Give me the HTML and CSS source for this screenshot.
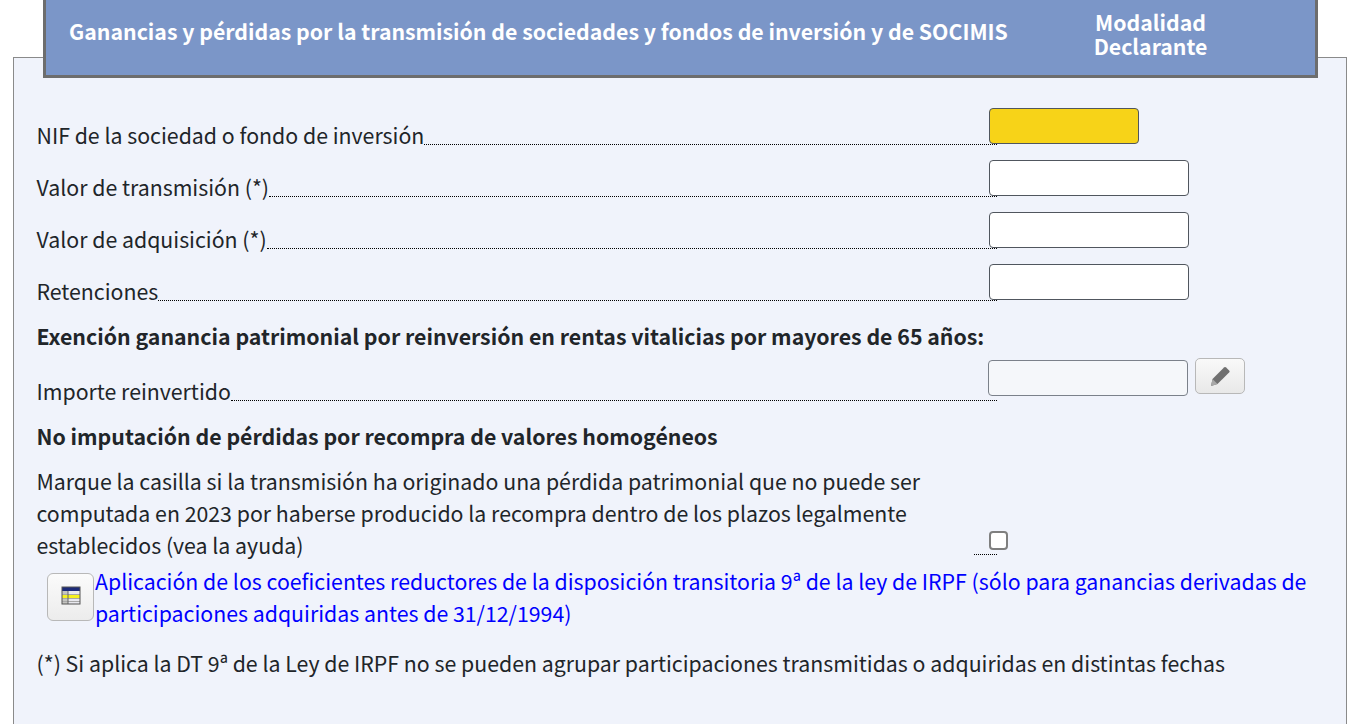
FILE: index.html
```html
<!DOCTYPE html>
<html lang="en">
<head>
    <meta charset="UTF-8">
    <meta name="viewport" content="width=device-width, initial-scale=1.0">
    <title>Ganancias y pérdidas</title>
    <link rel="stylesheet" href="styles.css">
</head>
<body>
    <div class="header">
        <div class="header-title">Ganancias y pérdidas por la transmisión de sociedades y fondos de inversión y de SOCIMIS</div>
        <div class="header-mode">Modalidad<br>Declarante</div>
    </div>
    <div class="panel">
        <div class="row">
            <div class="label"><span>NIF de la sociedad o fondo de inversión</span><i class="dots"></i></div>
            <input type="text" class="field short">
        </div>
        <div class="row">
            <div class="label"><span>Valor de transmisión (*)</span><i class="dots"></i></div>
            <input type="text" class="field">
        </div>
        <div class="row">
            <div class="label"><span>Valor de adquisición (*)</span><i class="dots"></i></div>
            <input type="text" class="field">
        </div>
        <div class="row">
            <div class="label"><span>Retenciones</span><i class="dots"></i></div>
            <input type="text" class="field">
        </div>
        <div class="section-title exempt">Exención ganancia patrimonial por reinversión en rentas vitalicias por mayores de 65 años:</div>
        <div class="row reinvest">
            <div class="label"><span>Importe reinvertido</span><i class="dots"></i></div>
            <input type="text" class="field disabled" disabled>
            <button type="button" class="edit-btn">
                <svg class="icon" width="24" height="24" viewBox="0 0 24 24"><path d="M3 22l1.500-7L16 3.500a1.500 1.500 0 0 1 2.100 0l3 3a1.500 1.500 0 0 1 0 2.100L9.500 20z" fill="#707070"/><path d="M3 22l1.500-7 5 5z" fill="#a8a8a8"/></svg>
            </button>
        </div>
        <div class="section-title homog">No imputación de pérdidas por recompra de valores homogéneos</div>
        <div class="check-row">
            <div class="check-text">Marque la casilla si la transmisión ha originado una pérdida patrimonial que no puede ser computada en 2023 por haberse producido la recompra dentro de los plazos legalmente establecidos (vea la ayuda)</div>
            <i class="dots check-dots"></i>
            <input type="checkbox" class="check">
        </div>
        <div class="link-row">
            <button type="button" class="table-btn">
                <svg class="icon" width="20" height="20" viewBox="0 0 20 20"><rect x="1" y="1" width="18" height="17" fill="#e8e8ee"/><rect x="1" y="1" width="6" height="17" fill="#c4c4c0"/><rect x="1" y="1" width="18" height="4" fill="#1c2a78"/><rect x="1" y="9" width="18" height="3" fill="#f5f020"/><path d="M1 8.500h18M1 12.500h18M1 15.500h18" stroke="#a8a8a8" stroke-width="1" fill="none"/><path d="M7 5v13" stroke="#666" stroke-width="1" fill="none"/><rect x="1" y="1" width="18" height="17" fill="none" stroke="#555" stroke-width="1"/></svg>
            </button>
            <a href="#" class="link">Aplicación de los coeficientes reductores de la disposición transitoria 9ª de la ley de IRPF (sólo para ganancias derivadas de participaciones adquiridas antes de 31/12/1994)</a>
        </div>
        <p class="note">(*) Si aplica la DT 9ª de la Ley de IRPF no se pueden agrupar participaciones transmitidas o adquiridas en distintas fechas</p>
    </div>
</body>
</html>
```
FILE: styles.css
```css
html, body {
    height: 100%;
}
body {
    margin: 0;
    display: flex;
    flex-direction: column;
    overflow: hidden;
    background-color: #fff;
    color: #212529;
    font-family: "Noto Sans CJK SC", "Open Sans", sans-serif;
    font-size: 21.3px;
    line-height: 32px;
}
.header {
    position: relative;
    z-index: 1;
    display: flex;
    align-items: center;
    box-sizing: border-box;
    height: 78px;
    margin: 0 40px 0 43px;
    padding: 0 0 0 23px;
    background-color: #7b96c8;
    border: 3px solid #6d6d6d;
    border-top: none;
    color: #fff;
    font-weight: 700;
    font-size: 21.28px;
}
.header-title {
    width: 1000px;
    line-height: 24px;
    margin-top: -13px;
}
.header-mode {
    width: 163px;
    text-align: center;
    line-height: 24px;
    margin-top: -8px;
}
.panel {
    flex: 1;
    margin: -21px 11px 0 13px;
    padding: 50px 0 0 22.5px;
    background-color: #f0f3fb;
    border: 1px solid #8a8a8a;
    border-bottom: none;
}
.row {
    display: flex;
    height: 37px;
    margin-bottom: 15px;
}
.label {
    display: flex;
    align-items: flex-end;
    width: 960.5px;
    flex-shrink: 0;
}
.label span {
    margin-bottom: -6px;
}
.dots {
    flex: 1;
    border-bottom: 1px dotted #000;
}
.field {
    position: relative;
    box-sizing: border-box;
    width: 200px;
    height: 36px;
    margin: 0 0 0 -8px;
    padding: 0 8px;
    background-color: #fff;
    border: 1px solid #50565e;
    border-radius: 4px;
}
.field.short {
    width: 150px;
    background-color: #f7d318;
}
.field.disabled {
    margin-left: -9px;
    background-color: #f5f7fa;
    border-color: #7b818a;
}
.section-title {
    font-weight: 700;
}
.exempt {
    margin-top: 19px;
    margin-bottom: 8px;
}
.reinvest {
    height: 41px;
    margin-bottom: 0;
}
.edit-btn {
    display: flex;
    align-items: center;
    justify-content: center;
    box-sizing: border-box;
    width: 50px;
    height: 36px;
    margin: -2px 0 0 7px;
    padding: 0;
    background: linear-gradient(#f9f9f9, #e8e8e8);
    border: 1px solid #b8b8b8;
    border-radius: 5px;
}
.icon {
    filter: blur(0.7px);
}
.homog {
    margin-top: 19px;
    margin-bottom: 13px;
}
.check-row {
    display: flex;
    align-items: flex-end;
}
.check-text {
    width: 937.5px;
    flex-shrink: 0;
}
.check-dots {
    flex: none;
    width: 23px;
    margin-bottom: 6px;
}
.check {
    appearance: none;
    box-sizing: border-box;
    width: 19px;
    height: 19px;
    margin: 0 0 11px -8px;
    background-color: #fff;
    border: 2px solid #7f7f7f;
    border-radius: 4px;
}
.link-row {
    display: flex;
    align-items: flex-start;
    margin: 4px 30px 0 10.5px;
}
.table-btn {
    display: flex;
    align-items: center;
    justify-content: center;
    flex-shrink: 0;
    box-sizing: border-box;
    width: 47px;
    height: 48px;
    margin-top: 8px;
    padding: 0 0 3px;
    background: linear-gradient(#fbfbfb, #ececec);
    border: 1px solid #b8b8b8;
    border-radius: 6px;
}
.link {
    margin-left: 1px;
    color: #0000ff;
    text-decoration: none;
}
.note {
    margin: 18px 0 0;
}
```
